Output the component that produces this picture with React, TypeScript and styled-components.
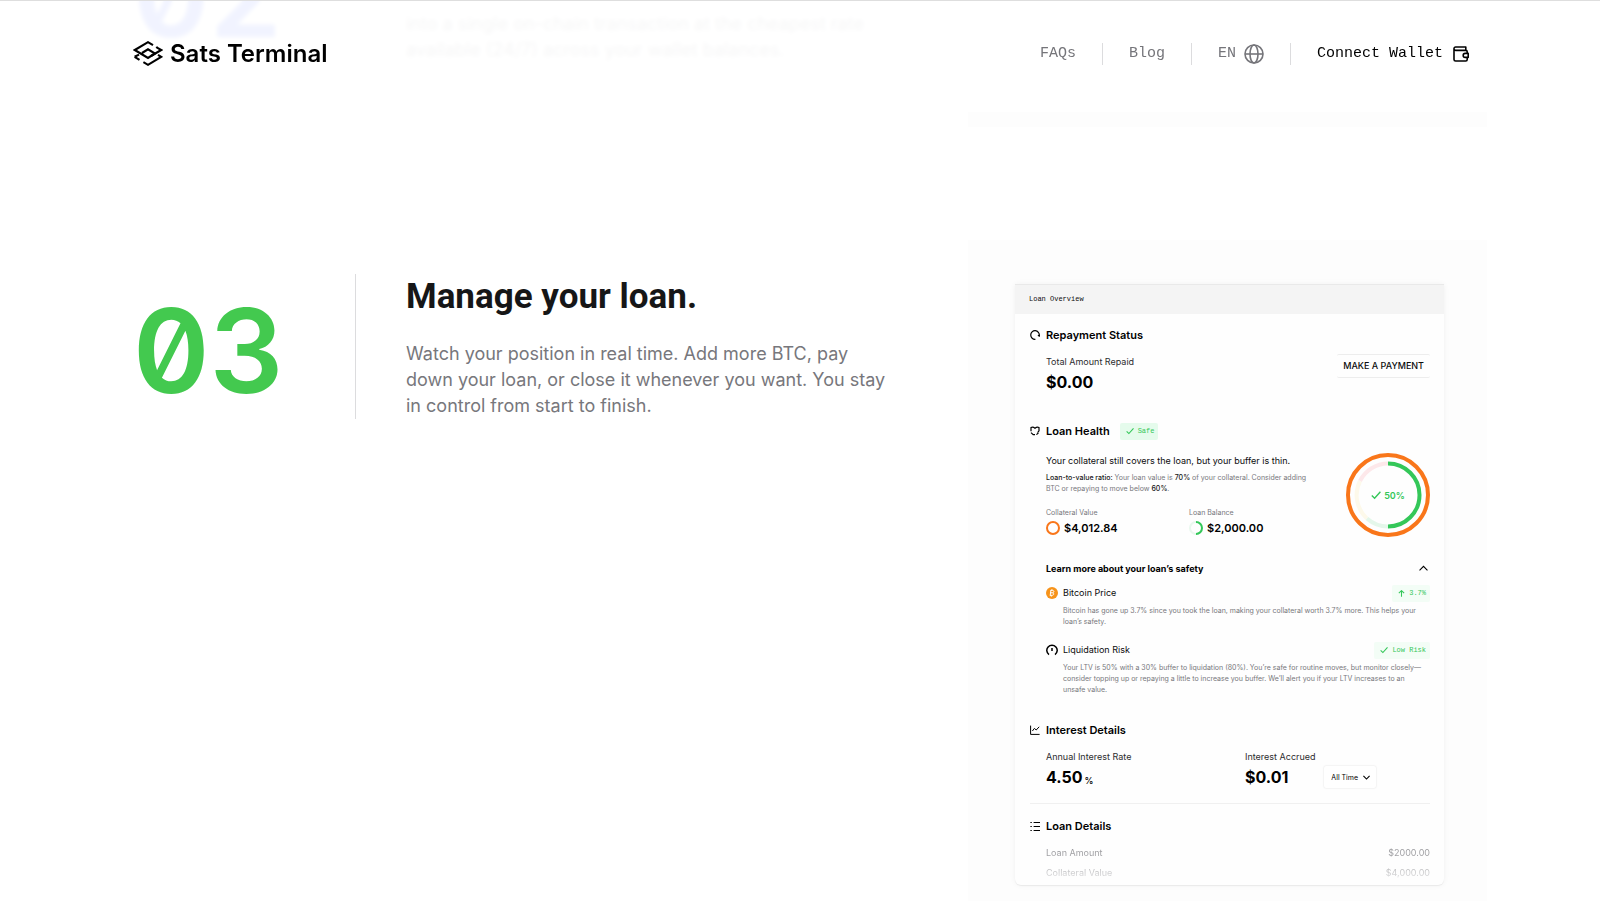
import React from "react";
import styled, { createGlobalStyle } from "styled-components";

const sans = `Inter, "Liberation Sans", sans-serif`;
const mono = `"Liberation Mono", monospace`;
const green = "#34c759";

const GlobalStyle = createGlobalStyle`
  *, *::before, *::after { box-sizing: border-box; }
  body { margin: 0; background: #fff; color: #0c0c0d; font-family: ${sans}; }
  h1, h2, h3, h4, p, dl, dd { margin: 0; }
  button, select { font: inherit; color: inherit; background: none; border: 0; padding: 0; cursor: pointer; }
  a { color: inherit; text-decoration: none; }
  svg { display: block; flex: none; }
`;

/* Header */
const Header = styled.header`
  position: fixed;
  inset: 0 0 auto 0;
  z-index: 2;
  height: 112px;
  padding: 0 131px 6px 133px;
  display: flex;
  align-items: center;
  justify-content: space-between;
  border-top: 1px solid #dedede;
  background: rgba(255, 255, 255, 0.93);
  backdrop-filter: blur(2px);
`;
const Brand = styled.a`
  display: flex;
  align-items: center;
  gap: 7px;
  font-size: 24px;
  line-height: 28px;
  font-weight: 600;
  color: #000;
`;
const Nav = styled.nav`
  display: flex;
  align-items: center;
  font-family: ${mono};
  font-size: 15px;
  line-height: 22px;
  color: #75757a;
`;
const NavDivider = styled.span`
  width: 1px;
  height: 22px;
  margin: 0 26px;
  background: #dcdcde;
`;
const NavButton = styled.button<{ $strong?: boolean }>`
  display: flex;
  align-items: center;
  gap: ${(p) => (p.$strong ? 10 : 8)}px;
  color: ${(p) => (p.$strong ? "#000" : "inherit")};
`;

/* Steps */
const Main = styled.main`
  min-height: 100vh;
  padding: 0 113px 0 133px;
`;
const StepGrid = styled.section`
  display: grid;
  grid-template-columns: 222px minmax(0, 1fr) 519px;
  align-items: start;
`;
const PassedStep = styled(StepGrid)`
  grid-template-rows: 127px;
  margin-bottom: 113px;
  overflow: hidden;
  align-items: end;
`;
const StepNumber = styled.div<{ $color: string; $passed?: boolean }>`
  padding: ${(p) => (p.$passed ? "0 0 72px" : "51px 0 0")};
  font-size: 116px;
  line-height: 120px;
  font-weight: 600;
  font-feature-settings: "zero";
  color: ${(p) => p.$color};
`;
const StepCopy = styled.div<{ $passed?: boolean }>`
  max-width: 537px;
  margin: ${(p) => (p.$passed ? "0 0 64px" : "34px 0 0")};
  padding-left: 50px;
  border-left: 1px solid ${(p) => (p.$passed ? "transparent" : "#dcdcde")};
`;
const StepTitle = styled.h2`
  padding-top: 1px;
  margin-bottom: 22px;
  font-family: Roboto, sans-serif;
  font-size: 35px;
  line-height: 44px;
  font-weight: 700;
  color: #161617;
`;
const StepText = styled.p`
  font-size: 18px;
  line-height: 26px;
  color: #77777c;
`;
const Panel = styled.div<{ $passed?: boolean }>`
  height: ${(p) => (p.$passed ? "127px" : "auto")};
  padding: ${(p) => (p.$passed ? "0" : "44px 43px 16px 47px")};
  background: #fdfdfd;
`;

/* Card */
const Card = styled.article`
  background: #fefefe;
  border-radius: 2px 2px 6px 6px;
  box-shadow: 0 0 6px rgba(0, 0, 0, 0.05), 0 1px 1px rgba(0, 0, 0, 0.06);
`;
const CardHeader = styled.h3`
  padding: 7px 14px;
  border-top: 1px solid #e9e9e9;
  background: #f4f4f4;
  font-family: ${mono};
  font-size: 7px;
  line-height: 15px;
  font-weight: 400;
`;
const CardBody = styled.div`
  padding: 13px 14px 2px 15px;
`;
const Block = styled.section<{ $gap?: number }>`
  padding-bottom: ${(p) => p.$gap ?? 0}px;
`;
const BlockTitle = styled.div`
  display: flex;
  align-items: center;
  height: 16px;
  gap: 6px;
  color: #000;
`;
const BlockHeading = styled.h4`
  font-size: 11px;
  line-height: 16px;
  font-weight: 600;
`;
const Indent = styled.div`
  padding-left: 16px;
`;
const SplitRow = styled.div`
  display: flex;
  justify-content: space-between;
  align-items: end;
`;
const Stats = styled.dl<{ $columns: string; $top: number }>`
  display: grid;
  grid-template-columns: ${(p) => p.$columns};
  padding-top: ${(p) => p.$top}px;
`;
const Label = styled.dt`
  font-size: 9px;
  line-height: 14px;
  color: #2c2c2e;
`;
const MutedLabel = styled.dt`
  font-size: 7px;
  line-height: 12px;
  color: #77777c;
`;
const Amount = styled.dd`
  display: flex;
  align-items: center;
  height: 22px;
  margin-top: 2px;
  font-size: 16px;
  font-weight: 700;
  color: #000;
`;
const Unit = styled.span`
  padding: 6px 0 0 2px;
  font-size: 9px;
  font-weight: 500;
`;
const SmallAmount = styled.dd`
  display: flex;
  align-items: center;
  gap: 4px;
  height: 16px;
  margin-top: 1px;
  font-size: 11px;
  font-weight: 600;
  color: #000;
`;
const PayButton = styled.button`
  height: 24px;
  margin-bottom: 15px;
  padding: 0 6px;
  border-top: 1px solid #ededed;
  border-bottom: 1px solid #ededed;
  border-radius: 2px;
  font-size: 9px;
  line-height: 22px;
  font-weight: 500;
`;
const Badge = styled.span<{ $soft?: boolean }>`
  display: flex;
  align-items: center;
  gap: 4px;
  height: 17px;
  padding: 0 4px 0 6px;
  border-radius: 2px;
  background: ${(p) => (p.$soft ? "#f3fdf6" : "#e5fbec")};
  font-family: ${mono};
  font-size: 7px;
  color: ${green};
`;
const TitleBadge = styled(Badge)`
  margin-left: 4px;
`;
const Health = styled.div`
  display: flex;
  align-items: center;
  justify-content: space-between;
  padding: 14px 0 23px 16px;
`;
const HealthCopy = styled.div`
  width: 272px;
`;
const Lead = styled.p`
  margin-bottom: 4px;
  font-size: 9px;
  line-height: 14px;
  white-space: nowrap;
`;
const Note = styled.p`
  font-size: 7px;
  line-height: 11px;
  color: #77777c;
  b { font-weight: 500; color: #161617; }
`;
const Gauge = styled.div`
  display: grid;
  place-items: center;
  > * { grid-area: 1 / 1; }
`;
const GaugeValue = styled.span`
  display: flex;
  align-items: center;
  gap: 3px;
  font-size: 9px;
  font-weight: 600;
  color: ${green};
`;
const Disclosure = styled.button`
  display: flex;
  align-items: center;
  justify-content: space-between;
  width: 100%;
  height: 16px;
  padding-right: 2px;
  font-size: 9px;
  font-weight: 700;
  color: #000;
`;
const Factor = styled.div<{ $top: number }>`
  padding-top: ${(p) => p.$top}px;
`;
const FactorRow = styled.div`
  display: flex;
  align-items: center;
  gap: 5px;
  height: 16px;
  margin-bottom: 4px;
`;
const FactorName = styled.h5`
  flex: 1;
  margin: 0;
  font-size: 9px;
  line-height: 16px;
  font-weight: 400;
`;
const FactorNote = styled(Note)`
  padding: 0 5px 0 17px;
`;
const Period = styled.label`
  position: relative;
  display: flex;
  align-items: center;
  margin-left: 36px;
  border-radius: 2px;
  background: #fff;
  box-shadow: 0 0 2px rgba(0, 0, 0, 0.14);
  svg { position: absolute; right: 6px; pointer-events: none; }
`;
const PeriodSelect = styled.select`
  appearance: none;
  width: 52px;
  height: 22px;
  padding-left: 7px;
  font-size: 7px;
  font-weight: 400;
`;
const Rule = styled.hr`
  margin: 15px 0 14px;
  border: 0;
  border-top: 1px solid #f0f0f0;
`;
const Details = styled.table`
  width: 100%;
  margin-top: 9px;
  border-collapse: collapse;
  font-size: 9px;
  line-height: 20px;
  color: #77777c;
  mask-image: linear-gradient(to bottom, rgba(0, 0, 0, 0.8), rgba(0, 0, 0, 0.6) 50%, rgba(0, 0, 0, 0.1));
  th { padding: 0; font-weight: 400; text-align: left; }
  td { padding: 0; text-align: right; }
`;

/* Icons */
const Logo = () => (
  <svg width="30" height="25" viewBox="0 0 30 25" fill="none" stroke="#000" strokeWidth="2.1" strokeLinejoin="miter">
    <path d="M20 4.1 15 1.2 1.8 9 15 17 22 12.5 15 8.3 9 12" />
    <path d="M23.6 5.6 24 6.6 28.2 9 18 15" />
    <path d="M6 13.6 1.6 15.8M1.6 15.8 6.5 18.9M10.4 21.2 15 23.8 28.2 15.8 25 13.8" />
  </svg>
);
const Globe = () => (
  <svg width="20" height="20" viewBox="0 0 20 20" fill="none" stroke="#75757a" strokeWidth="1.6">
    <circle cx="10" cy="10" r="9" />
    <ellipse cx="10" cy="10" rx="4" ry="9" />
    <path d="M1 10h18" />
  </svg>
);
const Wallet = () => (
  <svg width="16" height="16" viewBox="0 0 16 16" fill="none" stroke="#000" strokeWidth="1.6" strokeLinejoin="round">
    <path d="M12.8 4.4V1H2.6A1.6 1.6 0 0 0 1 2.6v10.8A1.6 1.6 0 0 0 2.6 15h10.2a1.4 1.4 0 0 0 1.4-1.4v-2M1 2.8a1.6 1.6 0 0 0 1.6 1.6h10.2a1.4 1.4 0 0 1 1.4 1.4v1.4" />
    <path d="M15.2 7.4h-3a2 2 0 0 0 0 4h3z" />
  </svg>
);
const Line: React.FC<{ size: number; w?: number; children: React.ReactNode }> = ({ size, w = 1.2, children }) => (
  <svg width={size} height={size} viewBox="0 0 10 10" fill="none" stroke="currentColor" strokeWidth={w}>
    {children}
  </svg>
);
const Progress = () => (
  <Line size={10}><path d="M5.4 9.3A4.3 4.3 0 1 1 9.3 5.6M7.9 5.2l1.4.9.6-1.4" /></Line>
);
const Heart = () => (
  <Line size={10}><path d="M1 5.2V1.6C2.4.8 3.6 1 5 2.2 6.4 1 7.6.8 9 1.6v3.2L7.6 6.6M1 6.6 3.2 8.6H5M6.4 8.6 8.4 7" /></Line>
);
const Chart = () => (
  <Line size={10} w={1}><path d="M.6.6v8.8h9M2.4 6l2-2.6L6.2 5l3-3.2" /></Line>
);
const List = () => (
  <Line size={10}><path d="M3.6 1.500H10M3.6 5.500H10M3.6 9.500H10M.4 1.500h1.4M.4 5.500h1.4M.4 9.500h1.4" /></Line>
);
const Check = ({ size = 8 }: { size?: number }) => (
  <Line size={size} w={1.4}><path d="M.8 5.4 3.6 8.2 9.4 1.8" /></Line>
);
const ArrowUp = () => (
  <Line size={7} w={1.5}><path d="M5 9.6V1M1.2 4.6 5 .9 8.8 4.6" /></Line>
);
const ChevronUp = () => (<Line size={9} w={1.2}><path d="M.6 7 5 2.6 9.4 7" /></Line>);
const ChevronDown = () => (<Line size={7} w={1.6}><path d="M.6 2.8 5 7.2 9.4 2.8" /></Line>);
const CollateralRing = () => (
  <svg width="14" height="14" viewBox="0 0 14 14" fill="none" stroke="#f9761a" strokeWidth="2"><circle cx="7" cy="7" r="6" /></svg>
);
const BalanceRing = () => (
  <svg width="14" height="14" viewBox="0 0 14 14" fill="none" strokeWidth="2">
    <circle cx="7" cy="7" r="6" stroke="#e9f8ee" />
    <path d="M7 1a6 6 0 0 1 0 12" stroke={green} />
  </svg>
);
const Coin = () => (
  <svg width="12" height="12" viewBox="0 0 12 12">
    <circle cx="6" cy="6" r="6" fill="#f7931a" />
    <path d="M4.9 3.2 4.2 8.4M4.6 3.4h2.2c1.6.2 1.3 2.2-.2 2.4H4.6M6.6 5.8c1.8.2 1.4 2.5-.4 2.5H3.9M5.9 2.2v1.2M5.3 8.4v1.2" fill="none" stroke="#fff" strokeWidth="1" />
  </svg>
);
const Meter = () => (
  <svg width="12" height="12" viewBox="0 0 12 12" fill="none" stroke="#000" strokeWidth="1.5">
    <path d="M3 10.6a5.2 5.2 0 1 1 6 0M6 4v3" />
  </svg>
);
const GaugeRings = () => (
  <svg width="84" height="84" viewBox="0 0 84 84" fill="none" strokeWidth="4">
    <circle cx="42" cy="42" r="40" stroke="#f9761a" />
    <path d="M42 10.5A31.5 31.5 0 0 0 14 28" stroke="#fde8ea" />
    <path d="M14 28A31.5 31.5 0 0 0 21 65.5" stroke="#fdf9ea" />
    <path d="M21 65.5A31.5 31.5 0 0 0 42 73.5" stroke="#e4f7ea" />
    <path d="M42 10.5a31.5 31.5 0 0 1 0 63" stroke={green} />
  </svg>
);

const loanDetails = [
  ["Loan Amount", "$2000.00"],
  ["Collateral Value", "$4,000.00"],
];

const LoanCard = () => (
  <Card>
    <CardHeader>Loan Overview</CardHeader>
    <CardBody>
      <Block $gap={30}>
        <BlockTitle><Progress /><BlockHeading>Repayment Status</BlockHeading></BlockTitle>
        <Indent>
          <SplitRow>
            <Stats $columns="auto" $top={12}>
              <Label>Total Amount Repaid</Label>
              <Amount>$0.00</Amount>
            </Stats>
            <PayButton type="button">MAKE A PAYMENT</PayButton>
          </SplitRow>
        </Indent>
      </Block>

      <Block $gap={27}>
        <BlockTitle>
          <Heart /><BlockHeading>Loan Health</BlockHeading>
          <TitleBadge><Check />Safe</TitleBadge>
        </BlockTitle>
        <Health>
          <HealthCopy>
            <Lead>Your collateral still covers the loan, but your buffer is thin.</Lead>
            <Note>
              <b>Loan-to-value ratio:</b> Your loan value is <b>70%</b> of your collateral. Consider adding
              BTC or repaying to move below <b>60%</b>.
            </Note>
            <Stats $columns="143px auto" $top={13}>
              <div>
                <MutedLabel>Collateral Value</MutedLabel>
                <SmallAmount><CollateralRing />$4,012.84</SmallAmount>
              </div>
              <div>
                <MutedLabel>Loan Balance</MutedLabel>
                <SmallAmount><BalanceRing />$2,000.00</SmallAmount>
              </div>
            </Stats>
          </HealthCopy>
          <Gauge>
            <GaugeRings />
            <GaugeValue><Check size={10} />50%</GaugeValue>
          </Gauge>
        </Health>
        <Indent>
          <Disclosure type="button" aria-expanded="true">Learn more about your loan’s safety<ChevronUp /></Disclosure>
          <Factor $top={9}>
            <FactorRow>
              <Coin /><FactorName>Bitcoin Price</FactorName>
              <Badge $soft><ArrowUp />3.7%</Badge>
            </FactorRow>
            <FactorNote>
              Bitcoin has gone up 3.7% since you took the loan, making your collateral worth 3.7% more. This helps your loan’s safety.
            </FactorNote>
          </Factor>
          <Factor $top={15}>
            <FactorRow>
              <Meter /><FactorName>Liquidation Risk</FactorName>
              <Badge $soft><Check />Low Risk</Badge>
            </FactorRow>
            <FactorNote>
              Your LTV is 50% with a 30% buffer to liquidation (80%). You’re safe for routine moves, but monitor closely—consider topping up or repaying a little to increase you buffer. We’ll alert you if your LTV increases to an unsafe value.
            </FactorNote>
          </Factor>
        </Indent>
      </Block>

      <Block>
        <BlockTitle><Chart /><BlockHeading>Interest Details</BlockHeading></BlockTitle>
        <Indent>
          <Stats $columns="199px auto" $top={12}>
            <div>
              <Label>Annual Interest Rate</Label>
              <Amount>4.50<Unit>%</Unit></Amount>
            </div>
            <div>
              <Label>Interest Accrued</Label>
              <Amount>
                $0.01
                <Period>
                  <PeriodSelect aria-label="Period" defaultValue="all"><option value="all">All Time</option></PeriodSelect>
                  <ChevronDown />
                </Period>
              </Amount>
            </div>
          </Stats>
        </Indent>
      </Block>
      <Rule />
      <Block>
        <BlockTitle><List /><BlockHeading>Loan Details</BlockHeading></BlockTitle>
        <Indent>
          <Details>
            <tbody>
              {loanDetails.map(([name, value]) => (
                <tr key={name}><th scope="row">{name}</th><td>{value}</td></tr>
              ))}
            </tbody>
          </Details>
        </Indent>
      </Block>
    </CardBody>
  </Card>
);

export default function App() {
  return (
    <>
      <GlobalStyle />
      <Header>
        <Brand href="#"><Logo />Sats Terminal</Brand>
        <Nav>
          <a href="#faqs">FAQs</a>
          <NavDivider />
          <a href="#blog">Blog</a>
          <NavDivider />
          <NavButton type="button">EN<Globe /></NavButton>
          <NavDivider />
          <NavButton type="button" $strong>Connect Wallet<Wallet /></NavButton>
        </Nav>
      </Header>
      <Main>
        <PassedStep>
          <StepNumber $color="#3d5cff" $passed>02</StepNumber>
          <StepCopy $passed>
            <StepText>
              into a single on-chain transaction at the cheapest rate available (24/7) across your wallet balances.
            </StepText>
          </StepCopy>
          <Panel $passed />
        </PassedStep>
        <StepGrid>
          <StepNumber $color="#43c94f">03</StepNumber>
          <StepCopy>
            <StepTitle>Manage your loan.</StepTitle>
            <StepText>
              Watch your position in real time. Add more BTC, pay down your loan, or close it whenever you want. You stay in control from start to finish.
            </StepText>
          </StepCopy>
          <Panel><LoanCard /></Panel>
        </StepGrid>
      </Main>
    </>
  );
}
